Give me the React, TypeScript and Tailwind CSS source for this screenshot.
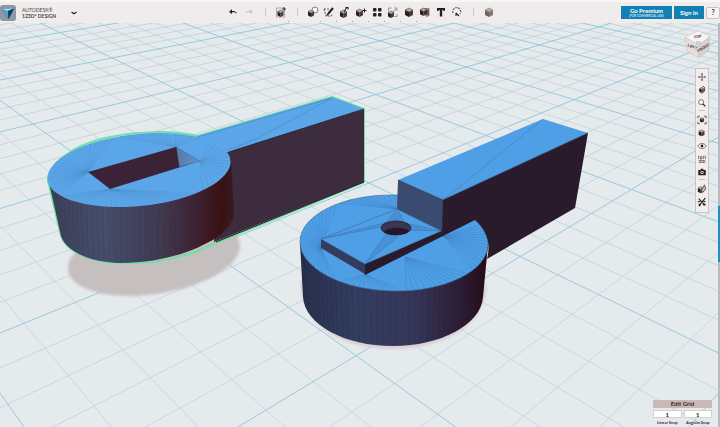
import type { ReactNode } from 'react';

type Point = [number, number];

const MINOR_STEPS = 5;

// Ground plane -> view coordinates, one unit per major grid cell
function project(i: number, j: number): Point {
  const w = 0.14 * i - 0.1387 * j + 1;
  return [(168.8 * i + 58.3 * j + 33) / w, (-22 * i + 27.9 * j + 124) / w];
}

function linePath(a: Point, b: Point) {
  return `M${a[0].toFixed(1)} ${a[1].toFixed(1)}L${b[0].toFixed(1)} ${b[1].toFixed(1)}`;
}

function buildGrid() {
  const major: string[] = [];
  const minor: string[] = [];
  for (let n = -60; n <= 90; n++) {
    const v = n / MINOR_STEPS;
    const bucket = n % MINOR_STEPS === 0 ? major : minor;
    bucket.push(linePath(project(v, -14), project(v, (0.9 + 0.14 * v) / 0.1387)));
    bucket.push(linePath(project((0.1387 * v - 0.9) / 0.14, v), project(24, v)));
  }
  return { major: major.join(''), minor: minor.join('') };
}

interface Rim {
  cx: number;
  cy: number;
  rx: number;
  ry: number;
  tilt: number;
}

function rimPoint(rim: Rim, deg: number): Point {
  const t = (deg * Math.PI) / 180;
  const r = (rim.tilt * Math.PI) / 180;
  const x = rim.rx * Math.cos(t);
  const y = rim.ry * Math.sin(t);
  return [rim.cx + x * Math.cos(r) - y * Math.sin(r), rim.cy + x * Math.sin(r) + y * Math.cos(r)];
}

function fan(rim: Rim, from: Point, start: number, end: number, step = 4) {
  let d = '';
  for (let a = start; a <= end; a += step) d += linePath(from, rimPoint(rim, a));
  return d;
}

const grid = buildGrid();

const leftRim: Rim = { cx: 139, cy: 170, rx: 91, ry: 36, tilt: -6 };
const rightRim: Rim = { cx: 394, cy: 243, rx: 94, ry: 48, tilt: 1 };

const leftFans = [
  fan(leftRim, [200, 161], -36, 50, 6),
  fan(leftRim, [110, 189], 54, 150),
  fan(leftRim, [88, 172], 152, 256),
  fan(leftRim, [176, 147], 260, 318, 6),
].join('');

const rightFans = [
  fan(rightRim, [321, 248], 128, 232),
  fan(rightRim, [365, 274], 84, 126),
  fan(rightRim, [405, 257], 38, 82),
  fan(rightRim, [443, 236], -24, 34, 4),
  fan(rightRim, [396, 209], 234, 272),
].join('');

function facets(rim: Rim, drop: number, squeeze: number) {
  let d = '';
  for (let a = 8; a < 176; a += 4) {
    const p = rimPoint(rim, a);
    d += linePath(p, [p[0] + (rim.cx - p[0]) * squeeze, p[1] + drop]);
  }
  return d;
}

const LEFT_BODY = 'M48 178L61 236C66 250 86 262 120 263C158 263 188 253 205 244C222 236 235 224 234 211L231 158Z';
const RIGHT_BODY = 'M300 243L303 297C305 325 345 346 393 346C440 346 481 325 483 297L488 245Z';

function Scene() {
  return (
    <svg className="absolute inset-0 h-full w-full" viewBox="0 23 720 404" preserveAspectRatio="xMidYMid slice" role="img" aria-label="3D workspace">
      <defs>
        <linearGradient id="leftBody">
          <stop offset="0" stopColor="#3b3f58" />
          <stop offset="0.3" stopColor="#464d6c" />
          <stop offset="0.62" stopColor="#40384f" />
          <stop offset="0.8" stopColor="#3d2331" />
          <stop offset="0.93" stopColor="#3c1114" />
          <stop offset="1" stopColor="#351c22" />
        </linearGradient>
        <linearGradient id="rightBody">
          <stop offset="0" stopColor="#28304c" />
          <stop offset="0.3" stopColor="#333d60" />
          <stop offset="0.6" stopColor="#35375a" />
          <stop offset="0.85" stopColor="#2c1e35" />
          <stop offset="1" stopColor="#260d17" />
        </linearGradient>
        <linearGradient id="slotWall">
          <stop offset="0" stopColor="#5879a3" />
          <stop offset="1" stopColor="#5f95cc" />
        </linearGradient>
        <clipPath id="leftClip">
          <path d={LEFT_BODY} />
        </clipPath>
        <clipPath id="rightClip">
          <path d={RIGHT_BODY} />
        </clipPath>
        <filter id="soft" x="-10%" y="-10%" width="120%" height="120%">
          <feGaussianBlur stdDeviation="1.5" />
        </filter>
      </defs>

      <rect y="0" width="720" height="427" fill="#e5ebed" />
      <path d={grid.minor} stroke="#bccfd8" strokeWidth="0.7" fill="none" />
      <path d={grid.major} stroke="#92c4da" strokeWidth="0.9" fill="none" />

      {/* part with the rectangular slot, selected */}
      <ellipse cx="154" cy="257" rx="87" ry="37" transform="rotate(-9 154 257)" fill="#c6bfc0" filter="url(#soft)" />
      <path
        d="M48 181C48 166 70 146 105 138C140 130 175 131 198 136L332 97L364 109V182L216 243C190 256 160 264 120 263C86 262 66 250 61 236Z"
        fill="none"
        stroke="#6fe0a0"
        strokeWidth="2"
        strokeLinejoin="round"
      />
      <path d="M364 109V182L214 242L222 150Z" fill="#3c2c3e" />
      <path d="M180 141L332 97L364 109L222 154Z" fill="#5ba6e9" />
      <path d="M364 109L229 152" stroke="#2c2634" strokeWidth="0.8" />
      <path d="M364 182L216 242" stroke="#211b22" strokeWidth="1" />
      <path d="M332 98L258 138L200 161M332 98L198 137" stroke="#4681b8" strokeWidth="0.5" fill="none" />
      <path d={LEFT_BODY} fill="url(#leftBody)" />
      <path d={facets(leftRim, 56, 0.04)} stroke="#1d1724" strokeWidth="0.5" opacity="0.15" clipPath="url(#leftClip)" />
      <ellipse cx="139" cy="170" rx="92" ry="36" transform="rotate(-6 139 170)" fill="#5ba6e9" />
      <path d={leftFans} stroke="#2f6499" strokeWidth="0.4" opacity="0.38" />
      <path d="M88 172L176 147L200 161L110 189Z" fill="#3b2236" />
      <path d="M176 147L200 161L179 167Z" fill="url(#slotWall)" />
      <path d="M176 147L179 167" stroke="#2b1a2c" strokeWidth="0.6" />

      {/* part with the stepped tab and round hole */}
      <path d="M300 280C302 330 345 349 393 349C442 349 484 328 487 285Z" fill="#d9ced4" filter="url(#soft)" />
      <path d={RIGHT_BODY} fill="url(#rightBody)" />
      <path d={facets(rightRim, 56, 0.04)} stroke="#14101f" strokeWidth="0.5" opacity="0.18" clipPath="url(#rightClip)" />
      <ellipse cx="394" cy="243" rx="94" ry="48" transform="rotate(1 394 243)" fill="#4f9fe6" stroke="#3c6793" strokeWidth="0.6" />
      <path d={rightFans} stroke="#28598f" strokeWidth="0.4" opacity="0.45" />
      <path d="M443 200L588 133L575 208L487 259C491 243 487 231 475 220L365 275V264L441 231Z" fill="#291a2c" />
      <path d="M321 239L365 264V274L321 248Z" fill="#343c5d" />
      <path d="M321 239L397 209L441 231L365 264Z" fill="#4f9fe6" stroke="#3b5f8d" strokeWidth="0.5" />
      <path
        d="M321 239L381 227M321 239L388 222M397 209L387 221M397 209L404 221M441 231L410 224M441 231L411 230M365 264L386 234M365 264L399 236"
        stroke="#3a6391"
        strokeWidth="0.4"
        fill="none"
      />
      <path d="M321 239L381 227L388 222Z M397 209L387 221L404 221Z M441 231L410 224L411 231Z M365 264L386 234L399 236Z" fill="#3d7fbe" opacity="0.45" />
      <ellipse cx="396" cy="228" rx="15" ry="7" fill="#3a3550" stroke="#23202f" strokeWidth="0.8" />
      <path d="M384 232C386 227 405 226 409 231C405 236 388 236 384 232Z" fill="#25162a" />
      <path d="M398 180L443 200L442 231L397 209Z" fill="#3b4b70" />
      <path d="M398 180L543 119L588 133L443 200Z" fill="#4f9fe6" />
      <path d="M543 119L443 200" stroke="#3c78b3" strokeWidth="0.5" />
      <path d="M443 200L588 133M443 200V231M398 180L443 200" stroke="#28293f" strokeWidth="0.7" />
    </svg>
  );
}

interface CubeProps {
  x?: number;
  y?: number;
  size?: number;
  dark?: string;
}

function Cube({ x = 2, y = 3, size = 7, dark = '#2b1d1f' }: CubeProps) {
  const h = size / 2;
  const q = size / 4;
  return (
    <g>
      <path d={`M${x} ${y + q}l${h} ${q}v${h + 1}l${-h} ${-q}z`} fill={dark} />
      <path d={`M${x + h} ${y + 2 * q}l${h} ${-q}v${h + 1}l${-h} ${q}z`} fill={dark} opacity="0.85" />
      <path d={`M${x} ${y + q}l${h} ${-q}l${h} ${q}l${-h} ${q}z`} fill="#b7a6a8" stroke={dark} strokeWidth="0.4" />
    </g>
  );
}

const ink = '#2b1d1f';

interface Tool {
  label: string;
  art: ReactNode;
  menu?: boolean;
}

const tools: Tool[] = [
  {
    label: 'Primitives',
    menu: true,
    art: (
      <>
        <circle cx="8" cy="4" r="3" fill="#f7f3f3" stroke="#6f6062" strokeWidth="0.8" />
        <Cube x={1} y={4} size={6} />
      </>
    ),
  },
  {
    label: 'Sketch',
    menu: true,
    art: (
      <>
        <path d="M1 3h5M1 3l2 7h5l2-2" fill="none" stroke="#6f6062" strokeWidth="1.1" strokeDasharray="2 1" />
        <path d="M5 8l5-6" stroke={ink} strokeWidth="2" />
        <path d="M3.500 10l.5-2.500 2 1.500z" fill={ink} />
      </>
    ),
  },
  {
    label: 'Construct',
    menu: true,
    art: (
      <>
        <Cube x={1} y={4} size={7} />
        <path d="M5 6l3-5M6.500 1.500h2.500v2" fill="none" stroke={ink} strokeWidth="1.1" />
      </>
    ),
  },
  {
    label: 'Modify',
    menu: true,
    art: (
      <>
        <Cube x={1} y={3} size={7} />
        <path d="M9.500 2.500v4M7.500 4.500h4" stroke={ink} strokeWidth="1" />
      </>
    ),
  },
  {
    label: 'Pattern',
    menu: true,
    art: (
      <>
        <rect x="2" y="2" width="3.500" height="3.500" rx="1" fill={ink} />
        <rect x="7" y="2" width="3.500" height="3.500" rx="1" fill={ink} />
        <rect x="2" y="7" width="3.500" height="3.500" rx="1" fill={ink} />
        <rect x="7" y="7" width="3.500" height="3.500" rx="1" fill={ink} />
      </>
    ),
  },
  {
    label: 'Grouping',
    menu: true,
    art: (
      <>
        <path d="M1.500 5V2h3M7 2h3v3M10 8v2.500H7.500" fill="none" stroke="#8b7d7f" strokeWidth="0.8" />
        <Cube x={1} y={5} size={6} />
        <path d="M6 6l3-3" stroke="#75676a" strokeWidth="0.8" />
      </>
    ),
  },
  { label: 'Combine', menu: true, art: <Cube x={2} y={2} size={8} /> },
  {
    label: 'Snap',
    art: (
      <>
        <path d="M5 2h5.500v8L7 11z" fill="#8f8082" />
        <Cube x={1} y={2} size={7} />
        <path d="M9 4v5" stroke={ink} strokeWidth="0.8" />
      </>
    ),
  },
  { label: 'Text', art: <path d="M2 2h8v3h-1.500V4H7.200v6.500H4.800V4H3.500v1H2z" fill={ink} /> },
  {
    label: 'Measure',
    art: (
      <>
        <path d="M2 7a4 4 0 1 1 7 1" fill="none" stroke="#75676a" strokeWidth="1.3" strokeDasharray="2 1" />
        <path d="M5 7l3 3M5 7v3" stroke={ink} strokeWidth="1.1" />
      </>
    ),
  },
];

function ToolButton({ label, art, menu }: Tool) {
  return (
    <button type="button" aria-label={label} className="relative flex h-4 w-4 items-center justify-center">
      <svg viewBox="0 0 12 12" className="h-3 w-3" aria-hidden="true">
        {art}
      </svg>
      {menu && <span className="absolute right-0 bottom-0 h-px w-px translate-y-0.5 bg-[#a79c9d]" />}
    </button>
  );
}

function Divider() {
  return (
    <span className="flex h-4 w-4 items-center justify-center">
      <span className="h-2 w-px bg-[#cfc6c6]" />
    </span>
  );
}

function TopBar() {
  return (
    <header className="relative z-10 grid h-[23px] shrink-0 grid-cols-[1fr_auto_1fr] items-center border-t-2 border-[#f8f6f6] bg-[#f0ecec]">
      <div className="flex items-center">
        <svg viewBox="0 0 16 16" className="h-4 w-4" aria-hidden="true">
          <rect width="16" height="16" rx="3" fill="#8e98a5" />
          <path d="M2 4l12-.5L8.500 14z" fill="#1d5f8d" />
          <path d="M2 4l6 2 .5 8z" fill="#48a5cf" />
          <path d="M2 4l12-.5L8 6z" fill="#b9e0ee" />
          <path d="M14 3.500L8 6l.5 8z" fill="#123c60" />
        </svg>
        <h1 className="ml-1.5 w-9 font-['Lato',sans-serif] text-[5px] leading-[6px] whitespace-nowrap text-[#4b4143]">
          <span className="block">AUTODESK®</span>
          <span className="block font-bold">123D° DESIGN</span>
        </h1>
        <button type="button" aria-label="Open menu" className="ml-2 flex h-4 w-4 items-center justify-center">
          <svg viewBox="0 0 6 4" className="h-1 w-1.5" aria-hidden="true">
            <path d="M.5 1l2.500 1.700L5.500 1" fill="none" stroke={ink} strokeWidth="1.200" />
          </svg>
        </button>
      </div>

      <nav aria-label="Tools" className="flex items-center pb-px pl-0.5">
        <ToolButton label="Undo" art={<path d="M5 3L2 6l3 2V6.500c2-.5 4 0 5 1.500C9.500 5.500 7.500 5 5 5z" fill={ink} />} />
        <ToolButton label="Redo" art={<path d="M7 3l3 3-3 2V6.500C5 6 3 6.500 2 8c.5-2.500 2.500-3 5-3z" fill="#c9c0c1" />} />
        <Divider />
        <ToolButton
          label="Transform"
          art={
            <>
              <rect x="1.500" y="2" width="8" height="9" fill="none" stroke="#a49698" strokeWidth="0.8" />
              <Cube x={2.5} y={4} size={6} />
              <path d="M9 1v4M7 3h4" stroke={ink} strokeWidth="0.8" />
            </>
          }
          menu
        />
        <Divider />
        {tools.map((tool) => (
          <ToolButton key={tool.label} {...tool} />
        ))}
        <Divider />
        <ToolButton label="Material" art={<Cube x={2} y={2} size={8} dark="#6f6163" />} />
      </nav>

      <div className="flex items-center justify-end gap-0.5 font-['Lato',sans-serif] font-bold text-white">
        <button type="button" className="flex h-[13px] w-[51px] flex-col items-center justify-center bg-[#137fb3] whitespace-nowrap">
          <span className="text-[6px] leading-[7px]">Go Premium</span>
          <span className="text-[3px] leading-[4px] font-normal">(FOR COMMERCIAL USE)</span>
        </button>
        <button type="button" className="h-[13px] w-[30px] bg-[#137fb3] text-[6px] leading-[13px]">
          Sign In
        </button>
        <button type="button" className="h-3 w-3.5 rounded-xs border border-[#c9c1c1] bg-[#f7f3f3] text-[7px] leading-[9px] text-[#3b2d2f]">
          ?
        </button>
      </div>
    </header>
  );
}

function ViewCube() {
  return (
    <svg viewBox="0 0 28 30" className="h-[30px] w-7" role="img" aria-label="View cube">
      <path d="M1 8L14 2l12 5-11 9z" fill="#f8f4f3" />
      <path d="M1 8l14 8v13L3 22z" fill="#e6dddc" />
      <path d="M15 16l11-9-1 14-10 8z" fill="#d9cfce" />
      <path d="M1 8L14 2l12 5-1 14-10 8L3 22zM1 8l14 8M26 7l-11 9v13" fill="none" stroke="#c6bcbb" strokeWidth="0.5" />
      <rect x="12" y="12" width="5" height="4" fill="#a9cfe4" opacity="0.7" />
      <g fill="#4a3b3d" fontFamily="Liberation Sans, sans-serif" fontWeight="700" textAnchor="middle">
        <text x="14" y="9" fontSize="4" transform="rotate(-12 14 9)">TOP</text>
        <text x="8" y="19" fontSize="4" transform="rotate(20 8 19)">LEFT</text>
        <text x="20" y="20" fontSize="4" transform="rotate(-30 20 20)">FRONT</text>
      </g>
    </svg>
  );
}

const viewTools: (Tool | null)[] = [
  {
    label: 'Pan',
    art: (
      <>
        <path d="M6 2v8M2 6h8" stroke={ink} strokeWidth="0.7" />
        <path d="M6 1l1 2H5zM6 11l1-2H5zM1 6l2-1v2zM11 6L9 5v2z" fill={ink} />
      </>
    ),
  },
  {
    label: 'Orbit',
    art: (
      <>
        <Cube x={3} y={3} size={5} />
        <path d="M3 5c0 6 5 6 6 1M6 3c2-3 4 0 3 4" fill="none" stroke={ink} strokeWidth="1" />
      </>
    ),
  },
  {
    label: 'Zoom',
    art: (
      <>
        <circle cx="5" cy="5" r="3" fill="#fbf8f8" stroke={ink} strokeWidth="0.7" />
        <path d="M7 7l3 3" stroke={ink} strokeWidth="1.500" />
      </>
    ),
  },
  null,
  {
    label: 'Fit',
    art: (
      <>
        <path d="M1 4V1.500h2.500M8.500 1.500H11V4M11 8v2.500H8.500M3.500 10.500H1V8" fill="none" stroke={ink} strokeWidth="0.8" />
        <Cube x={3.5} y={3} size={5} />
      </>
    ),
  },
  { label: 'Shading', art: <Cube x={2} y={2} size={7} /> },
  {
    label: 'Visibility',
    art: (
      <>
        <path d="M1 6c2.500-4 7.500-4 10 0-2.500 4-7.500 4-10 0z" fill="#fbf8f8" stroke={ink} strokeWidth="0.7" />
        <circle cx="6" cy="6" r="1.700" fill={ink} />
      </>
    ),
  },
  {
    label: 'Grid',
    art: (
      <>
        <path d="M2 2v4M4 3h2v3H4zM8 2v4M10 2v4M2 8h8M2 10h8" fill="none" stroke="#5e4d50" strokeWidth="0.9" />
        <path d="M4 7v4M8 7v4" stroke="#5e4d50" strokeWidth="0.6" />
      </>
    ),
  },
  {
    label: 'Screenshot',
    art: (
      <>
        <path d="M1.500 3.500H4l.7-1.500h2.600L8 3.500h2.500V10h-9z" fill={ink} />
        <circle cx="6" cy="6.500" r="2" fill="#f4efef" />
        <circle cx="6" cy="6.500" r="1" fill={ink} />
      </>
    ),
  },
  null,
  {
    label: 'Outline',
    art: (
      <>
        <Cube x={1} y={3} size={7} />
        <path d="M5 8l4-7 1.500 5L7 10z" fill="#cbbfc0" stroke={ink} strokeWidth="0.8" />
      </>
    ),
  },
  {
    label: 'Materials',
    art: (
      <>
        <path d="M2 2l8 8M10 1L3 10M1 6l3-1M7 4l3 2" stroke={ink} strokeWidth="1.300" />
        <path d="M2 8h2v3H2zM7 8h3v2H7z" fill={ink} />
      </>
    ),
  },
];

function ViewToolbar() {
  return (
    <nav aria-label="View" className="flex w-3.5 flex-col items-center border border-[#cdc3c3] bg-[#f2eeee] pt-px pb-1">
      {viewTools.map((tool, index) =>
        tool ? (
          <button key={tool.label} type="button" aria-label={tool.label} className="flex h-[13px] w-3 items-center justify-center">
            <svg viewBox="0 0 12 12" className="h-2.5 w-2.5" aria-hidden="true">
              {tool.art}
            </svg>
          </button>
        ) : (
          <span key={index} className="mt-px mb-0.5 h-px w-1.5 bg-[#cbbfbf]" />
        ),
      )}
    </nav>
  );
}

function SnapField({ id, label }: { id: string; label: string }) {
  return (
    <div className="flex flex-1 flex-col items-center">
      <input
        id={id}
        defaultValue="1"
        className="h-2 w-full border border-[#d8cfcf] bg-white text-center text-[6px] leading-[6px] font-bold text-[#2b1d1f]"
      />
      <label htmlFor={id} className="mt-0.5 text-[4px] leading-[5px] font-bold whitespace-nowrap text-[#3b2a2d]">
        {label}
      </label>
    </div>
  );
}

function GridPanel() {
  return (
    <section className="w-[59px] font-['Lato',sans-serif]">
      <button type="button" className="block h-2 w-full bg-[#c8b8b8] text-[6px] leading-[8px] font-bold text-[#3b2226]">
        Edit Grid
      </button>
      <div className="mt-0.5 flex gap-0.5">
        <SnapField id="linear-snap" label="Linear Snap" />
        <SnapField id="angular-snap" label="Angular Snap" />
      </div>
    </section>
  );
}

export default function App() {
  return (
    <div className="flex min-h-screen flex-col overflow-hidden bg-[#e5ebed]">
      <TopBar />
      <main className="relative flex-1">
        <Scene />
        <div className="absolute top-1.5 right-2 flex flex-col items-end gap-2">
          <ViewCube />
          <div className="pt-px pr-[3px]">
            <ViewToolbar />
          </div>
        </div>
        <div className="absolute right-2 bottom-0.5">
          <GridPanel />
        </div>
        <div className="absolute inset-y-0 right-0 flex w-0.5 flex-col bg-[#b9babd]">
          <div className="h-[183px]" />
          <button type="button" aria-label="Open library" className="h-14 w-full bg-[#1b8fc6]" />
        </div>
      </main>
    </div>
  );
}
